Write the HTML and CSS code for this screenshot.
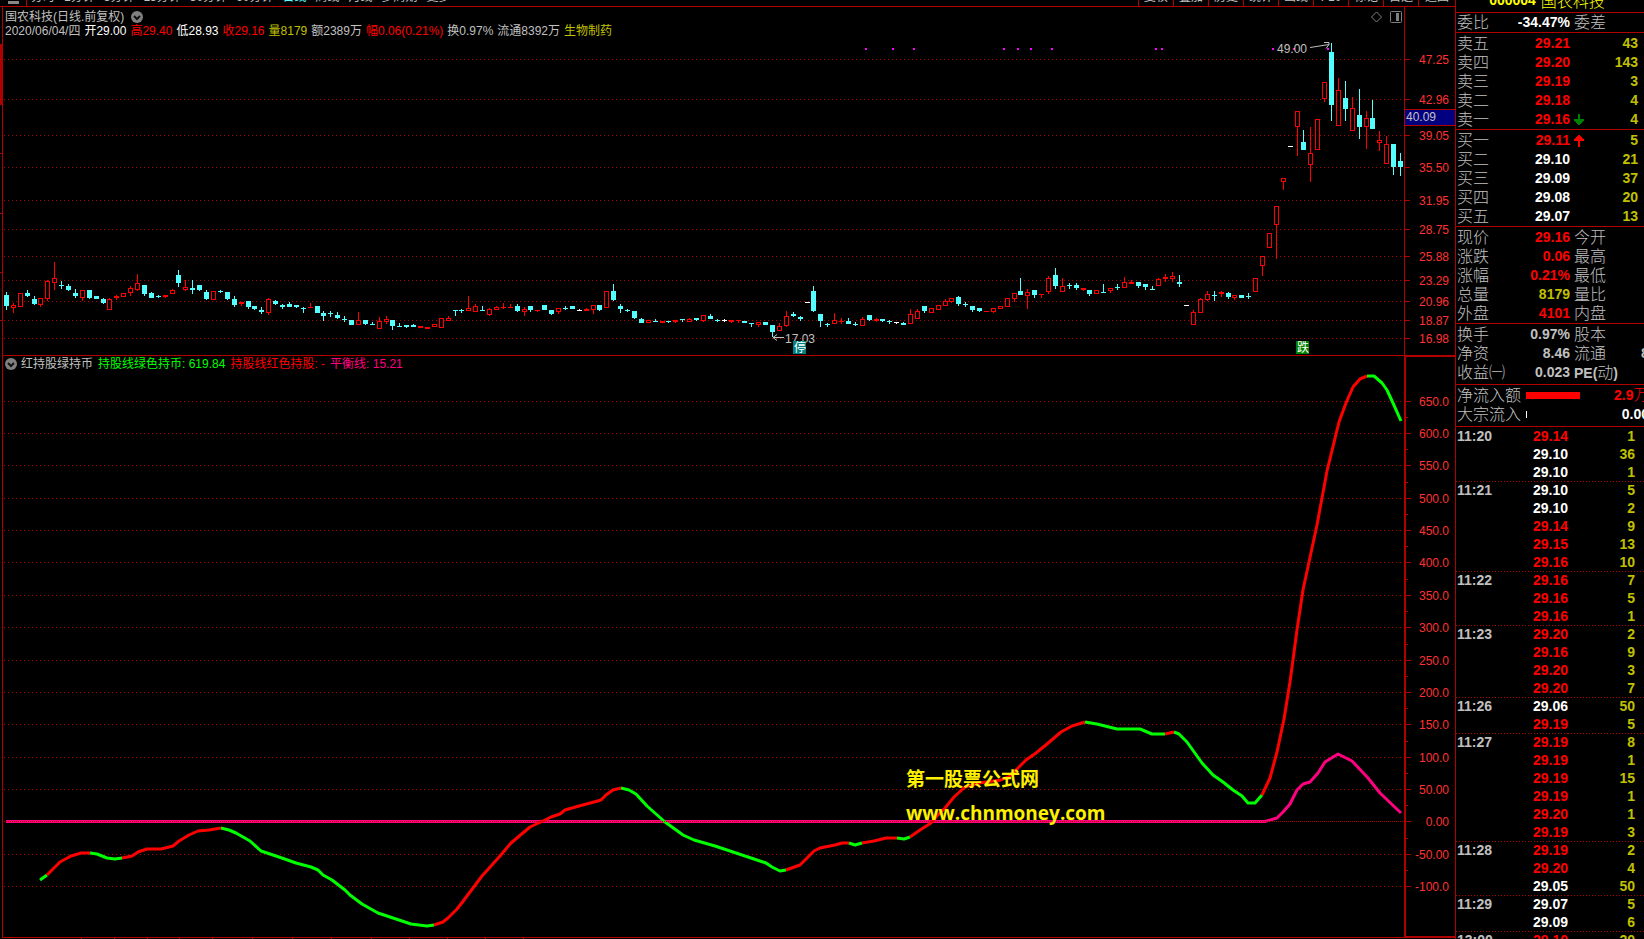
FILE: index.html
```html
<!DOCTYPE html>
<html lang="zh-CN">
<head>
<meta charset="utf-8">
<title>国农科技 日线</title>
<link rel="stylesheet" href="styles.css">
</head>
<body>
<main class="terminal">
  <nav class="toolbar">
    <div class="periods">
      <button class="tool menu" aria-label="菜单"></button>
      <button class="tool">分时</button>
      <button class="tool">1分钟</button>
      <button class="tool">5分钟</button>
      <button class="tool">15分钟</button>
      <button class="tool">30分钟</button>
      <button class="tool">60分钟</button>
      <button class="tool active">日线</button>
      <button class="tool">周线</button>
      <button class="tool">月线</button>
      <button class="tool">多周期</button>
      <button class="tool">更多</button>
    </div>
    <div class="actions">
      <button class="tool">复权</button>
      <button class="tool">叠加</button>
      <button class="tool">历史</button>
      <button class="tool">统计</button>
      <button class="tool">画线</button>
      <button class="tool">F10</button>
      <button class="tool">标记</button>
      <button class="tool">自选</button>
      <button class="tool">返回</button>
    </div>
  </nav>

  <svg class="edge" viewBox="0 7 2 931" preserveAspectRatio="none" aria-hidden="true">
    <path d="M0 44h2v61h-2zM0 153h2v1h-2zM0 213h2v1h-2zM0 272h2v1h-2zM0 320h2v1h-2z"/>
  </svg>

  <section class="panel price">
    <div class="plot">
      <svg class="layer" id="priceChart" viewBox="3 7 1401 348" preserveAspectRatio="none"></svg>
      <svg class="layer" id="priceLabels"></svg>
      <header class="heading">
        <div class="line">
          <h1 class="name">国农科技(日线.前复权)</h1>
          <button class="round" aria-label="展开"><svg viewBox="0 0 12 12"><circle cx="6" cy="6" r="6"/><path d="M3 5l3 3 3-3"/></svg></button>
          <div class="corner">
            <svg viewBox="0 0 31 12" aria-hidden="true"><path d="M5.500 1l5 5-5 5-5-5z"/><rect x="19.500" y=".5" width="11" height="11" rx="1"/><path class="solid" d="M25 2h3v8h-3z"/></svg>
          </div>
        </div>
        <p class="line facts">
          <span>2020/06/04/四</span><span class="white">开29.00</span><span class="red">高29.40</span><span class="white">低28.93</span><span class="red">收29.16</span><span class="yellow">量8179</span><span>额2389万</span><span class="red">幅0.06(0.21%)</span><span>换0.97%</span><span>流通8392万</span><span class="yellow">生物制药</span>
        </p>
      </header>
    </div>
    <svg class="axis" id="priceAxis"></svg>
  </section>

  <section class="panel indicator">
    <div class="plot">
      <svg class="layer" id="lineChart" viewBox="3 356 1401 581" preserveAspectRatio="none"></svg>
      <svg class="layer" id="lineLabels"></svg>
      <header class="heading">
        <p class="line legend">
          <button class="round" aria-label="收起"><svg viewBox="0 0 12 12"><circle cx="6" cy="6" r="6"/><path d="M3 5l3 3 3-3"/></svg></button>
          <span class="title">红持股绿持币</span><span class="lime">持股线绿色持币: 619.84</span><span class="red">持股线红色持股: -</span><span class="pink">平衡线: 15.21</span>
        </p>
      </header>
    </div>
    <svg class="axis" id="lineAxis"></svg>
  </section>

  <svg class="foot" viewBox="2 938 1453 1" preserveAspectRatio="none" aria-hidden="true"><path id="footTicks"/></svg>
</main>

<aside class="quote">
  <h2 class="stock">000004 <span class="cn">国农科技</span></h2>
  <section class="block single">
    <table class="stats">
      <tr><th>委比</th><td class="white">-34.47%</td><th class="second">委差</th><td></td></tr>
    </table>
  </section>
  <section class="block">
    <table class="book">
      <tr><th>卖五</th><td class="red">29.21</td><td></td><td class="vol">43</td></tr>
      <tr><th>卖四</th><td class="red">29.20</td><td></td><td class="vol">143</td></tr>
      <tr><th>卖三</th><td class="red">29.19</td><td></td><td class="vol">3</td></tr>
      <tr><th>卖二</th><td class="red">29.18</td><td></td><td class="vol">4</td></tr>
      <tr><th>卖一</th><td class="red">29.16</td><td class="mark"><svg class="down" viewBox="0 0 10 12"><path d="M4 0h2v5h4v2h-1v1h-1v1h-1v1h-1v1h-2v-1h-1v-1h-1v-1h-1v-1h-1v-2h4z"/></svg></td><td class="vol">4</td></tr>
    </table>
  </section>
  <section class="block">
    <table class="book">
      <tr><th>买一</th><td class="red">29.11</td><td class="mark"><svg class="up" viewBox="0 0 10 12"><path d="M4 12h2v-6h4v-2h-1v-1h-1v-1h-1v-1h-1v-1h-2v1h-1v1h-1v1h-1v1h-1v2h4z"/></svg></td><td class="vol">5</td></tr>
      <tr><th>买二</th><td class="white">29.10</td><td></td><td class="vol">21</td></tr>
      <tr><th>买三</th><td class="white">29.09</td><td></td><td class="vol">37</td></tr>
      <tr><th>买四</th><td class="white">29.08</td><td></td><td class="vol">20</td></tr>
      <tr><th>买五</th><td class="white">29.07</td><td></td><td class="vol">13</td></tr>
    </table>
  </section>
  <section class="block">
    <table class="stats">
      <tr><th>现价</th><td class="red">29.16</td><th class="second">今开</th><td></td></tr>
      <tr><th>涨跌</th><td class="red">0.06</td><th class="second">最高</th><td></td></tr>
      <tr><th>涨幅</th><td class="red">0.21%</td><th class="second">最低</th><td></td></tr>
      <tr><th>总量</th><td class="yellow">8179</td><th class="second">量比</th><td></td></tr>
      <tr><th>外盘</th><td class="red">4101</td><th class="second">内盘</th><td></td></tr>
    </table>
  </section>
  <section class="block padded">
    <table class="stats">
      <tr><th>换手</th><td>0.97%</td><th class="second">股本</th><td></td></tr>
      <tr><th>净资</th><td>8.46</td><th class="second">流通</th><td class="over">8</td></tr>
      <tr><th>收益㈠</th><td>0.023</td><th class="second"><b>PE(</b>动<b>)</b></th><td></td></tr>
    </table>
  </section>
  <section class="block padded flow">
    <div class="flowrow"><span>净流入额</span><i class="bar"></i><b class="red">2.9<span class="cn">万</span></b></div>
    <div class="flowrow"><span>大宗流入</span><i class="nib"></i><b class="white">0.00</b></div>
  </section>
  <table class="ticks"><tbody id="ticks"></tbody></table>
</aside>
<script src="chart.js"></script>
</body>
</html>
```

FILE: styles.css
```css
* { box-sizing: border-box; }

body {
  margin: 0;
  height: 100vh;
  display: flex;
  overflow: hidden;
  background: #000;
  color: #c0c0c0;
  font: 12px/14px "Liberation Sans", "Noto Sans CJK SC", sans-serif;
}

h1, h2, p { margin: 0; font: inherit; }
button { border: 0; padding: 0; background: none; color: inherit; font: inherit; }
table { border-collapse: collapse; border-spacing: 0; table-layout: fixed; width: 100%; }
td, th { padding: 0; font-weight: inherit; text-align: left; }

.white { color: #fff; }
.red { color: #f00; }
.yellow { color: #c0c000; }
.lime { color: #0f0; }
.pink { color: #ff0080; }

.terminal {
  flex: 1;
  min-width: 0;
  display: grid;
  grid-template-columns: 2px minmax(0, 1fr);
  grid-template-rows: 7px minmax(0, 348fr) minmax(0, 583fr) 1px;
}

.toolbar {
  grid-column: 1 / 3;
  display: flex;
  justify-content: space-between;
  border-bottom: 1px solid #b00000;
  overflow: hidden;
}
.tool { height: 18px; margin-top: -12px; line-height: 18px; white-space: nowrap; }
.periods { display: flex; gap: 9px; }
.periods .menu { width: 27px; border-right: 1px solid #b00000; margin-right: -5px; }
.periods .menu::after { content: ""; display: block; width: 11px; height: 3px; margin: 10px 0 0 8px; background: #888; }
.periods .active { color: #54ffff; }
.actions { display: flex; }
.actions .tool { width: 35px; border-left: 1px solid #b00000; }
.actions .tool:last-child { width: 37px; }

.edge { grid-row: 2 / 4; width: 2px; height: 100%; fill: #b00000; }
.foot { grid-column: 2; width: 100%; height: 1px; fill: #b00000; }

.panel {
  grid-column: 2;
  display: grid;
  grid-template-columns: minmax(0, 1fr) 51px;
  grid-template-rows: minmax(0, 1fr);
  border-left: 1px solid #b00000;
}
.indicator { border-top: 1px solid #b00000; border-bottom: 1px solid #b00000; }
.plot { display: grid; grid-template-rows: minmax(0, 1fr); grid-template-columns: minmax(0, 1fr); }
.layer { grid-area: 1 / 1; width: 100%; height: 100%; }
.heading { grid-area: 1 / 1; padding: 3px 2px 0; }
.indicator .heading { padding-top: 1px; }
.line { display: flex; align-items: center; height: 14px; white-space: nowrap; }
.facts { gap: 4px; }
.legend { gap: 5px; }
.legend .round { margin-right: -1px; }
.price .name { margin-right: 7px; }
.round { width: 12px; height: 12px; }
.round svg { display: block; width: 12px; height: 12px; fill: #808080; }
.round path { fill: none; stroke: #111; stroke-width: 2; }
.corner { margin-left: auto; }
.corner svg { display: block; width: 31px; height: 12px; fill: none; stroke: #808080; }
.corner .solid { fill: #808080; stroke: none; }

.axis { width: 100%; height: 100%; border-left: 1px solid #b00000; fill: #ff3232; }
.indicator .axis { border-left-width: 2px; border-top: 1px solid #b00000; border-bottom: 1px solid #b00000; }
.axis rect { fill: #b00000; }
.axis .cursor { fill: #000080; }
.axis .value { fill: #c0c0c0; }

.grid { stroke: #b00000; stroke-dasharray: 1 3; fill: none; shape-rendering: crispEdges; }
.zero { stroke: #b00000; stroke-dasharray: 1 1; fill: none; shape-rendering: crispEdges; }
.candle { shape-rendering: crispEdges; }
.curve { fill: none; stroke-width: 3; stroke-linejoin: round; }
.note { fill: #c0c0c0; }
.pointer { fill: none; stroke: #c0c0c0; }
.dot { fill: #f0f; }
.badge { fill: #fff; }
.halt { fill: #008080; }
.fall { fill: #008000; }
.watermark { fill: #fff000; font: bold 19px "Open Sans", "Noto Sans CJK SC", sans-serif; }

.quote {
  width: 189px;
  overflow: hidden;
  border-left: 1px solid #b00000;
  font: bold 14px/19px "Liberation Sans", "Noto Sans CJK SC", sans-serif;
}
.stock {
  display: flex;
  align-items: center;
  justify-content: center;
  gap: 5px;
  height: 12px;
  padding: 0 6px 12px 0;
  color: #ff0;
  font-weight: bold;
}
.cn, .quote th, .flowrow > span { font: 300 16px/17px "Noto Sans CJK SC", sans-serif; }
.block { border-top: 1px solid #b00000; padding: 1px 0 0 1px; }
.single { padding-top: 0; }
.padded { padding-bottom: 2px; }
.quote tr { height: 19px; }
.quote td, .quote th { height: 19px; white-space: nowrap; }
.quote th { vertical-align: top; }
.quote td { text-align: right; }
.book th { width: 48px; }
.book td:nth-child(2) { width: 65px; }
.book td:nth-child(3) { width: 17px; }
.quote .mark { padding-left: 4px; text-align: left; }
.mark svg { display: block; width: 10px; height: 12px; }
.down { fill: #008000; }
.up { fill: #f00; }
.book .vol { color: #c0c000; padding-right: 6px; }
.stats th:first-child { width: 48px; }
.stats td:nth-child(2) { width: 65px; }
.stats .second { width: 71px; padding-left: 4px; }
.second b { font: bold 14px/1px "Liberation Sans", sans-serif; }
.quote .over { text-align: left; }
.flowrow { display: grid; grid-template-columns: 69px 88px 35px; align-items: center; height: 19px; }
.flowrow b { text-align: right; white-space: nowrap; line-height: 19px; }
.flowrow > span { align-self: start; }
.flowrow .cn { line-height: 1px; }
.bar { width: 54px; height: 7px; background: #f00; }
.nib { width: 1px; height: 7px; background: #fff; }

.ticks { border-top: 1px solid #b00000; line-height: 18px; }
.ticks .first td { background: repeating-linear-gradient(90deg, #b00000 0 1px, #000 1px 3px) 0 0 / 100% 1px no-repeat; }
.quote .ticks tr, .quote .ticks td { height: 18px; line-height: 18px; }
.quote .ticks .time { width: 60px; padding-left: 1px; text-align: left; }
.ticks .deal { width: 52px; }
.ticks .vol { color: #c0c000; padding-right: 9px; }
```

FILE: chart.js
```js
const NS = "http://www.w3.org/2000/svg";
const $ = id => document.getElementById(id);

function add(parent, tag, attrs, text) {
  const el = document.createElementNS(NS, tag);
  for (const k in attrs) el.setAttribute(k, attrs[k]);
  if (text) el.textContent = text;
  parent.appendChild(el);
  return el;
}

const CYAN = "#54ffff", RED = "#f00", WHITE = "#fff";

/* kind, high, body top, body bottom, low */
const candles = `c292,295,306,310 r303,305,308,313 r293,293,307,307 c290,293,296,297 c296,299,304,305
r298,298,305,307 r280,281,299,301 r262,278,283,290 c281,285,286,289 c284,286,290,291
c289,293,296,298 r290,290,298,301 c290,290,298,299 c296,296,299,299 c298,299,303,304
r298,299,310,310 r295,296,298,300 r293,293,297,297 r286,288,293,296 r274,283,290,291
c285,285,294,296 c292,293,298,298 c295,296,297,298 r295,295,297,298 r289,290,294,294
c270,275,283,287 r280,287,290,291 c280,288,290,294 c285,285,290,291 c290,292,299,300
r291,291,300,300 c290,291,292,293 c292,292,299,300 c296,299,305,307 r302,302,304,306
c301,301,307,309 c306,306,309,310 c307,310,312,314 r298,299,313,315 c300,301,304,305
c304,305,307,309 c302,304,307,307 c305,305,307,308 c307,308,309,313 r303,307,308,308
c306,306,313,313 c311,313,316,321 c311,313,314,317 c312,315,318,319 c316,319,320,322
c320,320,325,325 r312,320,325,325 c320,320,324,325 c322,324,325,325 r317,321,329,329
r316,319,322,324 c320,320,326,330 c323,326,327,327 c325,325,327,328 c324,325,327,327
r326,326,328,328 r327,327,329,329 r324,324,327,327 r318,318,328,328 r316,318,321,321
c310,310,311,316 c309,310,311,313 r296,308,311,311 r304,306,312,312 c306,310,311,311
r308,309,315,316 r306,307,310,310 r303,307,308,309 r304,307,308,308 c304,306,311,312
r307,309,312,316 c306,306,310,312 r310,310,311,312 c305,305,310,310 c310,310,314,315
r308,308,312,314 c306,308,309,310 c306,306,309,309 w309,310,311,311 r308,309,311,311
r305,305,310,314 c305,305,310,311 r291,291,308,308 c284,291,300,301 c304,306,309,313
c309,310,311,312 c311,311,318,319 c318,319,323,323 r320,320,323,323 c319,321,322,322
r321,321,323,323 c321,321,322,323 r320,320,322,323 c319,319,320,322 r318,319,322,322
c318,318,320,321 r315,315,321,322 c314,316,319,319 c319,320,321,322 w319,320,321,322
r320,320,322,323 r320,320,321,323 c321,321,323,323 c323,323,324,327 r322,322,325,327
c322,322,325,325 c325,325,332,337 r323,326,331,331 r311,316,326,327 c312,314,316,317
c316,317,319,321 w302,302,303,303 c286,291,311,312 c314,314,321,327 c323,324,325,327
r313,320,324,324 r318,321,322,324 c318,321,324,324 c322,324,325,326 r317,319,326,326
c315,315,320,321 r318,319,321,322 c319,319,321,322 c320,321,322,324 w322,322,323,324
c322,323,325,325 r309,314,324,324 r309,311,319,319 c306,306,311,313 r308,308,313,313
r305,305,310,310 r299,301,306,306 r298,298,302,303 c296,297,304,306 c302,304,305,307
c306,306,310,312 c308,308,311,312 r311,311,312,312 r308,308,312,313 r306,306,309,309
r298,298,307,307 r293,293,299,302 c278,291,295,295 r289,292,296,309 c290,290,295,298
r294,294,295,298 r276,278,292,294 c268,275,286,289 r278,286,292,292 c283,285,286,289
c283,285,288,290 r288,288,290,291 c290,290,294,296 r290,290,294,294 c284,292,293,293
r288,288,291,293 c284,287,288,290 r277,282,288,288 r280,282,284,284 c282,282,286,288
c284,284,287,290 c286,289,290,290 r278,279,286,286 r274,277,279,282 r272,276,279,282
c275,282,284,287 w305,305,306,306 r310,312,325,325 r298,299,313,313 r291,294,300,301
c291,295,296,301 r291,292,294,297 c292,293,297,299 r295,295,298,300 c295,295,298,298
c293,296,297,299 r278,278,292,292 r256,256,266,276 r233,233,248,248 r206,206,225,259
r178,178,182,190 w146,146,147,147 r111,111,127,156 c130,142,150,150 r127,153,165,182
r119,119,150,150 r82,82,99,102 c43,52,105,121 r78,90,126,126 c81,98,109,121
r97,108,131,131 c89,115,127,139 r111,118,127,149 c100,118,129,129 r131,140,143,151
r136,144,164,164 c144,144,167,175 c153,161,167,176`.split(/\s+/);

const priceLevels = [[59, "47.25"], [99, "42.96"], [135, "39.05"], [167, "35.50"], [200, "31.95"], [229, "28.75"],
  [256, "25.88"], [280, "23.29"], [301, "20.96"], [320, "18.87"], [338, "16.98"]];
const lineLevels = [[401, "650.0"], [433, "600.0"], [465, "550.0"], [498, "500.0"], [530, "450.0"], [562, "400.0"],
  [595, "350.0"], [627, "300.0"], [660, "250.0"], [692, "200.0"], [724, "150.0"], [757, "100.0"],
  [789, "50.00"], [821, "0.00"], [854, "-50.00"], [886, "-100.0"]];

/* Price panel */
const price = $("priceChart");
for (const [y] of priceLevels) add(price, "path", { class: "grid", d: `M4 ${y + 0.5}H1403` });
for (const x of [865, 892, 913, 1003, 1017, 1030, 1051, 1155, 1161, 1272, 1293, 1327])
  add(price, "rect", { class: "dot", x, y: 48, width: 2, height: 2 });

/* Candles advance by 7 units, with a 6-unit step about every tenth one */
const candleX = i => 6 + 7 * i - (Math.floor((i - 4.6) / 10.15) + 1);

candles.forEach((row, i) => {
  const x = candleX(i);
  const [high, top, bottom, low] = row.slice(1).split(",").map(Number);
  const color = { c: CYAN, r: RED, w: WHITE }[row[0]];
  const g = add(price, "g", { class: "candle", fill: color });
  if (high < top) add(g, "rect", { x, y: high, width: 1, height: top - high });
  if (low > bottom) add(g, "rect", { x, y: bottom, width: 1, height: low - bottom });
  if (row[0] === "r" && bottom - top > 2)
    add(g, "rect", { x: x - 1.5, y: top + 0.5, width: 4, height: bottom - top - 1, fill: "#000", stroke: color });
  else add(g, "rect", { x: x - 2, y: top, width: 5, height: bottom - top });
});
add(price, "path", { class: "pointer", d: "M1310 47.500L1329 44.500M1324 42.500h5v2l-3 4" });
add(price, "path", { class: "pointer", d: "M784 337.500H773M777 334.500l-4 3 4 3" });

const px = x => (x - 3) / 1401 * 100 + "%";
const py = y => (y - 7) / 348 * 100 + "%";
const labels = $("priceLabels");
add(labels, "text", { class: "note", x: px(1277), y: py(53) }, "49.00");
add(labels, "text", { class: "note", x: px(785), y: py(343) }, "17.03");
for (const [x, kind, ch] of [[793, "halt", "停"], [1296, "fall", "跌"]]) {
  add(labels, "rect", { class: kind, x: px(x), y: py(341), width: 13, height: 13 });
  add(labels, "text", { class: "badge", x: px(x), dx: 1, y: py(352) }, ch);
}

/* Indicator panel */
const lines = $("lineChart");
for (const [y] of lineLevels) if (y !== 821) add(lines, "path", { class: "grid", d: `M4 ${y + 0.5}H1403` });

add(lines, "polyline", { class: "curve", stroke: "#ff0080", points: "6,821.5 1265,821.5 1277,818 1283,812 1290,804 1297,790 1303,784 1310,782 1318,773 1325,762 1338,754 1352,761 1368,778 1380,793 1401,813" });

const curve = [
  ["#0f0", "40,880 47,875"],
  [RED, "47,875 60,862 71,856 81,853 90,853"],
  ["#0f0", "90,853 97,854 107,858 115,859 122,858"],
  [RED, "122,858 132,856 138,852 147,849 161,849 173,846 179,841 189,835 198,831 209,830 221,828"],
  ["#0f0", "221,828 229,830 236,833 250,841 261,851 279,857 296,863 311,867 318,870 323,875 332,880 345,890 350,895 362,904 378,913 393,918 411,924 427,926 434,925"],
  [RED, "434,925 443,922 448,918 457,909 464,900 482,876 500,856 511,843 530,827 545,820 551,817 560,814 565,810 579,806 594,802 601,800 606,795 613,790 621,788"],
  ["#0f0", "621,788 629,790 636,794 647,806 665,822 672,827 683,835 694,840 715,846 736,853 754,859 766,863 772,867 780,871 786,870"],
  [RED, "786,870 800,865 814,851 820,848 835,845 842,843 849,843"],
  ["#0f0", "849,843 855,845 862,843"],
  [RED, "862,843 874,841 886,838 897,838"],
  ["#0f0", "897,838 904,839 910,837"],
  [RED, "910,837 920,830 931,823 936,817 945,808 954,797 965,787 979,783 1001,780 1010,776 1026,760 1036,753 1047,744 1061,732 1072,726 1085,722"],
  ["#0f0", "1085,722 1097,724 1117,729 1140,729 1152,734 1165,734"],
  [RED, "1165,734 1174,732"],
  ["#0f0", "1174,732 1179,734 1187,742 1202,763 1213,775 1223,782 1233,790 1242,796 1248,803 1255,803 1262,795"],
  [RED, "1262,795 1270,778 1277,752 1284,719 1290,682 1297,630 1303,590 1309,562 1317,525 1327,471 1339,422 1346,403 1353,387 1360,379 1367,376"],
  ["#0f0", "1367,376 1374,376 1382,383 1387,390 1393,403 1401,421"]
];
for (const [stroke, points] of curve) add(lines, "polyline", { class: "curve", stroke, points });
add(lines, "path", { class: "zero", d: "M4 821.500H1403" });

const ly = y => (y - 356) / 581 * 100 + "%";
add($("lineLabels"), "text", { class: "watermark", x: px(906), y: ly(786) }, "第一股票公式网");
add($("lineLabels"), "text", { class: "watermark", x: px(906), y: ly(820) }, "www.chnmoney.com");

/* Value axes */
function axis(svg, levels, top, height, halves) {
  const at = y => (y - top) / height * 100 + "%";
  levels.forEach(([y, label], i) => {
    add(svg, "rect", { x: 0, y: at(y), width: 5, height: 1 });
    if (halves && i < levels.length - 1)
      add(svg, "rect", { x: 0, y: at(Math.round((y + levels[i + 1][0]) / 2)), width: 2, height: 1 });
    add(svg, "text", { x: halves ? 43 : 44, y: at(y), dy: 5, "text-anchor": "end" }, label);
  });
  return at;
}
const at = axis($("priceAxis"), priceLevels, 7, 348, false);
axis($("lineAxis"), lineLevels, 357, 579, true);
add($("priceAxis"), "rect", { x: 0, y: at(109), width: 50, height: 17 });
add($("priceAxis"), "rect", { class: "cursor", x: 0, y: at(110), width: 50, height: 15 });
add($("priceAxis"), "text", { class: "value", x: 1, y: at(121) }, "40.09");

$("footTicks").setAttribute("d", [81, 114, 147, 179, 212, 252, 292, 331, 371, 409, 447, 485, 523].map(x => `M${x} 938h1v1h-1z`).join(""));

const trades = [
  ["11:20", "29.14 1", "!29.10 36", "!29.10 1"],
  ["11:21", "!29.10 5", "!29.10 2", "29.14 9", "29.15 13", "29.16 10"],
  ["11:22", "29.16 7", "29.16 5", "29.16 1"],
  ["11:23", "29.20 2", "29.16 9", "29.20 3", "29.20 7"],
  ["11:26", "!29.06 50", "29.19 5"],
  ["11:27", "29.19 8", "29.19 1", "29.19 15", "29.19 1", "29.20 1", "29.19 3"],
  ["11:28", "29.19 2", "29.20 4", "!29.05 50"],
  ["11:29", "!29.07 5", "!29.09 6"],
  ["13:00", "29.10 20"]
];
trades.forEach(([time, ...deals], g) => deals.forEach((deal, i) => {
  const tr = $("ticks").insertRow();
  if (g && !i) tr.className = "first";
  const [p, v] = deal.replace("!", "").split(" ");
  [[i ? "" : time, "time"], [p, "deal " + (deal[0] === "!" ? "white" : "red")], [v, "vol"]].forEach(([text, cls]) => {
    const td = tr.insertCell();
    td.className = cls;
    td.textContent = text;
  });
}));
```
